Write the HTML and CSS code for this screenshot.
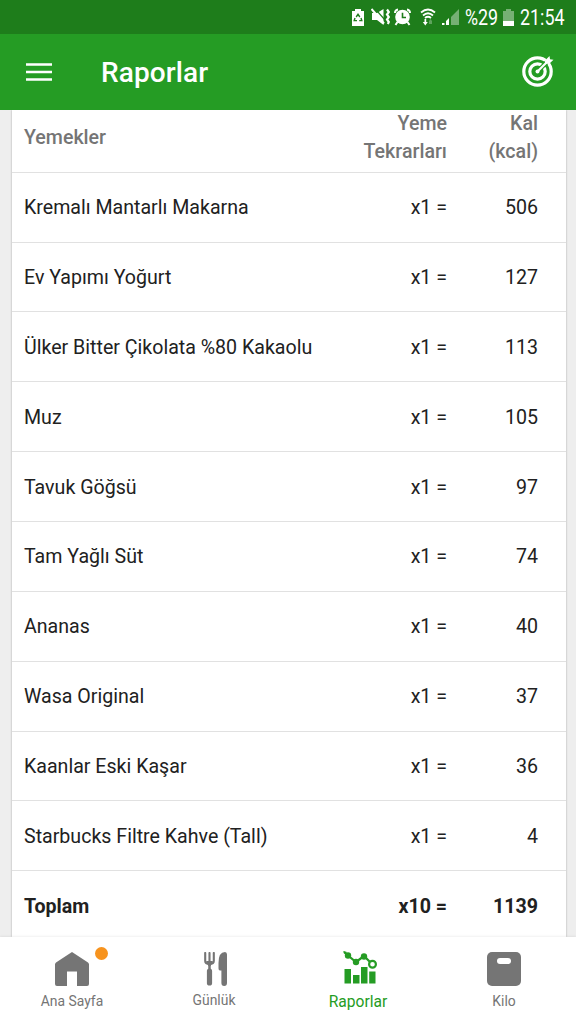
FILE: index.html
```html
<!DOCTYPE html>
<html lang="tr">
<head>
    <meta charset="utf-8" />
    <title>Raporlar</title>
    <link rel="stylesheet" href="styles.css">
</head>
<body>
    <div class="status">
        <svg class="saver" width="12" height="17" viewBox="0 0 12 17">
            <path d="M3 0h6v2h3v15H0V2h3z" fill="#fff" />
            <path d="M4.200 8l1.800-2.800L7.800 8M9 9l.8 2.600H7.200M5 11.600H2.200L3 9" fill="none" stroke="#1e7d1b" stroke-width="1.400" />
        </svg>
        <svg class="mute" width="19" height="18" viewBox="0 0 19 18">
            <path d="M1 5h5l6.500-4v16L6 12H1z" fill="#fff" />
            <path d="M3.500 0L14 12" stroke="#1e7d1b" stroke-width="1.200" />
            <path d="M.5 1L13 15.500" stroke="#fff" stroke-width="2" />
            <path d="M16 1.500l1.800 2.500-1.800 2.500 1.800 2.500-1.800 2.500 1.800 2.500-1 2" fill="none" stroke="#fff" stroke-width="2.200" />
        </svg>
        <svg class="alarm" width="17" height="18" viewBox="0 0 17 18">
            <path d="M1 5Q1 2 4 1.500M16 5Q16 2 13 1.500M3.500 14l-2 3M13.500 14l2 3" fill="none" stroke="#fff" stroke-width="2" />
            <circle cx="8.500" cy="9" r="7.300" fill="#fff" />
            <path d="M8.500 4.800V9.500H12" fill="none" stroke="#1e7d1b" stroke-width="1.600" />
        </svg>
        <svg class="wifi" width="16" height="18" viewBox="0 0 16 18">
            <path d="M1 4.500Q8-1.500 15 4.500M3 7.500Q8 3 13 7.500M5 10Q8 7.500 11 10" fill="none" stroke="#fff" stroke-width="1.800" />
            <path d="M4.500 11v3H2.800l2.500 3.500 2.500-3.500H6.200v-3z" fill="#fff" />
            <path d="M9 16v-3l1.500-2 1.500 2v3z" fill="#5fa35d" />
        </svg>
        <svg class="signal" width="17" height="18" viewBox="0 0 17 18">
            <path d="M9 17V9l8-8v16z" fill="#76b074" />
            <path d="M0 17v-2h2.500v2zM4 17v-4l3-3v7z" fill="#fff" />
        </svg>
        <span class="percent"><span>%29</span></span>
        <svg class="battery" width="11" height="17" viewBox="0 0 11 17">
            <path d="M3 0h5v2h3v11H0V2h3z" fill="#76b074" />
            <path d="M0 12h11v5H0z" fill="#fff" />
        </svg>
        <span class="clock"><span>21:54</span></span>
    </div>

    <header>
        <svg width="26" height="18" viewBox="0 0 26 18">
            <path d="M0 1.500h26M0 9h26M0 16.500h26" stroke="#fff" stroke-width="2.700" />
        </svg>
        <h1>Raporlar</h1>
        <svg class="target" width="32" height="32" viewBox="0 0 32 32">
            <g fill="none" stroke="#fff">
                <circle cx="15.500" cy="16.500" r="13.700" stroke-width="3.200" />
                <circle cx="15.500" cy="16.500" r="7.700" stroke-width="3.200" />
            </g>
            <circle cx="15.500" cy="16.500" r="2" fill="#fff" />
            <path d="M17.500 14.500L28 4" stroke="#259c24" stroke-width="4.500" />
            <path d="M15 17L27 5" stroke="#fff" stroke-width="2.200" />
            <path d="M23 8.500V5.500l4.500-4.500.5 3.300 3.500.5-4.500 4.200z" fill="#fff" />
        </svg>
    </header>

    <main>
        <div class="card">
            <div class="row head"><span>Yemekler</span><span>Yeme<br>Tekrarları</span><span>Kal<br>(kcal)</span></div>
            <div class="row"><span>Kremalı Mantarlı Makarna</span><span>x1 =</span><span>506</span></div>
            <div class="row"><span>Ev Yapımı Yoğurt</span><span>x1 =</span><span>127</span></div>
            <div class="row"><span>Ülker Bitter Çikolata %80 Kakaolu</span><span>x1 =</span><span>113</span></div>
            <div class="row"><span>Muz</span><span>x1 =</span><span>105</span></div>
            <div class="row"><span>Tavuk Göğsü</span><span>x1 =</span><span>97</span></div>
            <div class="row"><span>Tam Yağlı Süt</span><span>x1 =</span><span>74</span></div>
            <div class="row"><span>Ananas</span><span>x1 =</span><span>40</span></div>
            <div class="row"><span>Wasa Original</span><span>x1 =</span><span>37</span></div>
            <div class="row"><span>Kaanlar Eski Kaşar</span><span>x1 =</span><span>36</span></div>
            <div class="row"><span>Starbucks Filtre Kahve (Tall)</span><span>x1 =</span><span>4</span></div>
            <div class="row total"><span>Toplam</span><span>x10 =</span><span>1139</span></div>
        </div>
    </main>

    <nav>
        <a class="home">
            <svg width="34" height="34" viewBox="0 0 34 34">
                <path d="M17 0L33 10.500q1 .8 1 2V32q0 2-2 2H22V19.500H12V34H2q-2 0-2-2V12.500q0-1.200 1-2z" fill="#757575" />
            </svg>
            <i class="dot"></i>
            <span>Ana Sayfa</span>
        </a>
        <a class="diary">
            <svg width="24" height="34" viewBox="0 0 24 34">
                <path d="M1.200 1v8q0 3 4.300 3t4.300-3V1M5.500 1v12" fill="none" stroke="#757575" stroke-width="2.100" stroke-linecap="round" />
                <path d="M2 9h7l-2.500 5h-2z" fill="#757575" />
                <path d="M5.500 13v8" stroke="#757575" stroke-width="2.500" />
                <path d="M5.500 19v12" stroke="#757575" stroke-width="5.200" stroke-linecap="round" />
                <path d="M23 2.500V31q0 3-2.800 3t-2.800-3V18.500H16q-1.500 0-1.500-2V11Q14.500 0 21 0q2 0 2 2.500z" fill="#757575" />
            </svg>
            <span>Günlük</span>
        </a>
        <a class="reports">
            <svg width="34" height="33" viewBox="0 0 34 33">
                <path d="M1 1l4 3.500 8 6.500 8-6 8 8" fill="none" stroke="#259c24" stroke-width="2.200" />
                <path d="M0 0l4 1-2 2z" fill="#259c24" />
                <circle cx="5" cy="4.500" r="3.200" fill="#259c24" />
                <circle cx="13" cy="11" r="3.200" fill="#259c24" />
                <circle cx="21" cy="5.500" r="3.200" fill="#259c24" />
                <circle cx="29.500" cy="13.300" r="3.400" fill="#fff" stroke="#259c24" stroke-width="2.200" />
                <path d="M1.500 18H8v14.500H1.500zM10 24h6.500v8.500H10zM18 16h6.500v16.500H18zM26.200 20.500h6.300v12h-6.300z" fill="#259c24" />
            </svg>
            <span>Raporlar</span>
        </a>
        <a class="weight">
            <svg width="34" height="34" viewBox="0 0 34 34">
                <rect width="34" height="34" rx="5" fill="#757575" />
                <rect x="10" y="6" width="14" height="6" rx="3" fill="#fff" />
            </svg>
            <span>Kilo</span>
        </a>
    </nav>
</body>
</html>
```

FILE: styles.css
```css
* {
    box-sizing: border-box;
}

body {
    margin: 0;
    width: 576px;
    height: 1024px;
    display: flex;
    flex-direction: column;
    overflow: hidden;
    font-family: Roboto, sans-serif;
    background-color: #eee;
}

.status {
    height: 34px;
    flex: none;
    display: flex;
    align-items: center;
    padding-left: 352px;
    background-color: #1e7d1b;
    color: #fff;
    font-size: 21.500px;
    white-space: nowrap;
}

.status svg {
    flex: none;
}

.mute {
    margin-left: 7px;
}

.alarm {
    margin-left: 4px;
}

.wifi {
    margin-left: 9px;
}

.signal {
    margin-left: 6px;
}

.percent {
    width: 33px;
    margin-left: 6px;
}

.battery {
    margin-left: 5px;
}

.clock {
    width: 45px;
    margin-left: 6px;
}

/* narrow status bar digits */
.percent span, .clock span {
    display: inline-block;
    transform: scaleX(.83);
    transform-origin: left;
}

header {
    height: 76px;
    flex: none;
    display: flex;
    align-items: center;
    padding: 0 22px 0 26px;
    background-color: #259c24;
    color: #fff;
}

h1 {
    margin: 1px auto 0 49px;
    font-size: 28px;
    font-weight: 500;
    letter-spacing: .1px;
}

.target {
    margin-bottom: 3px;
}

main {
    flex: 1;
    min-height: 0;
    overflow: hidden;
    padding: 0 10px 0 12px;
}

.card {
    height: 100%;
    background-color: #fff;
    box-shadow: 0 0 2px rgba(0, 0, 0, .3);
}

.row {
    height: 69.850px;
    display: grid;
    grid-template-columns: 1fr 110px 91px;
    align-items: center;
    padding: 1px 28px 0 12px;
    border-bottom: 1px solid #e1e1e1;
    font-size: 19.600px;
    color: #212121;
}

.row span + span {
    text-align: right;
}

.head {
    height: 62.800px;
    padding-top: 0;
    padding-bottom: 12px;
    font-weight: 500;
    font-size: 19.600px;
    line-height: 28px;
    color: #757575;
}

.total {
    border-bottom: none;
    font-weight: bold;
}

nav {
    height: 87px;
    flex: none;
    display: flex;
    background-color: #fff;
    box-shadow: 0 -1px 2px rgba(0, 0, 0, .06);
    position: relative;
}

nav a {
    width: 144px;
    display: flex;
    flex-direction: column;
    align-items: center;
    position: relative;
    padding-top: 15px;
    font-size: 13.900px;
    line-height: 18px;
    color: #757575;
}

nav span {
    margin-top: 6px;
}

.dot {
    position: absolute;
    left: 95px;
    top: 10px;
    width: 13px;
    height: 13px;
    border-radius: 50%;
    background-color: #f7931e;
}

.diary span {
    margin: 5px 4px 0 0;
}

.reports {
    padding-top: 14px;
    font-size: 15.600px;
    color: #259c24;
}

.reports span {
    margin: 9px 4px 0 0;
}
```
